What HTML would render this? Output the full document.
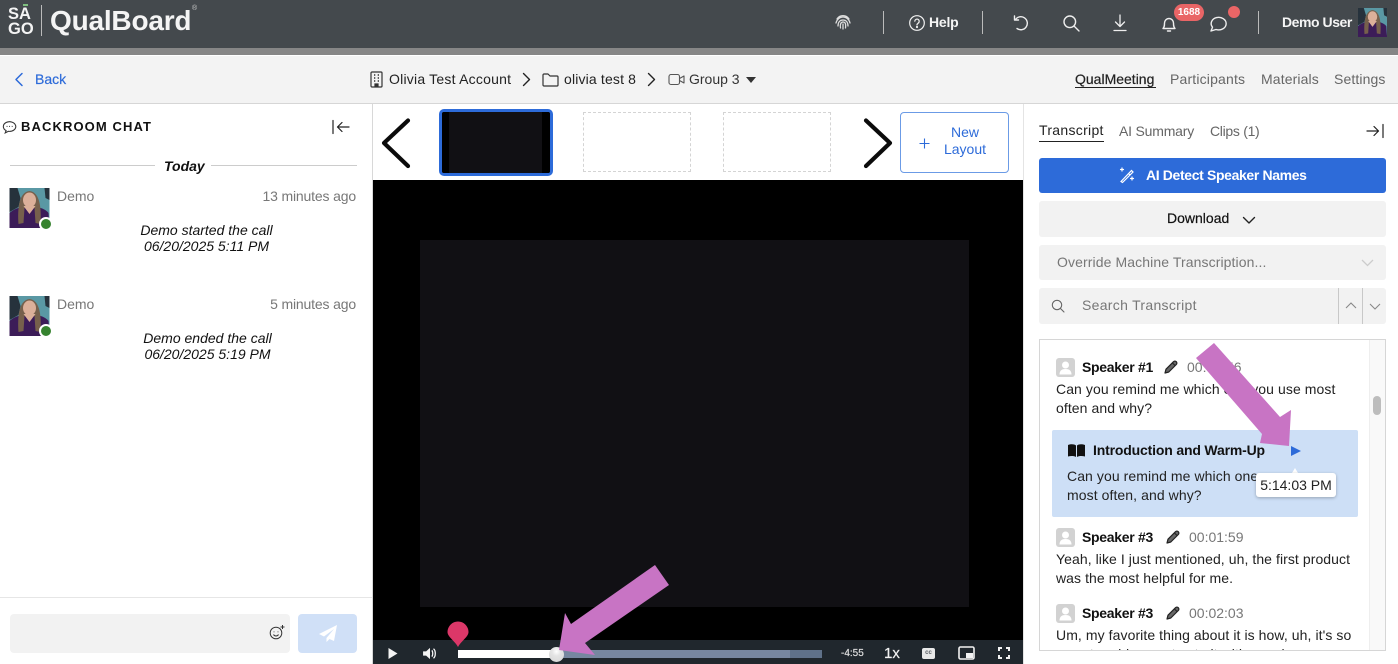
<!DOCTYPE html>
<html lang="en">
<head>
<meta charset="utf-8">
<title>QualBoard</title>
<style>
html,body{margin:0;padding:0;width:1398px;height:664px;overflow:hidden;background:#fff}
body{position:relative;font-family:"Liberation Sans",Arial,sans-serif;color:#111}
.a{position:absolute}
.t{position:absolute;white-space:nowrap;line-height:18px}
svg{position:absolute;overflow:visible}
</style>
</head>
<body>
<svg width="0" height="0" style="position:absolute">
  <symbol id="av" viewBox="0 0 40 40">
    <rect width="40" height="40" rx="4" fill="#5a98a4"/>
    <path d="M0 0h8l3 10-2 9-9 5z" fill="#26323c"/>
    <path d="M35 0h5v12l-4-2z" fill="#26323c"/>
    <path d="M0 40V25c3-3 8-5 12-6h16c4 1 9 3 11 6l1 15z" fill="#3c1c58"/>
    <path d="M9 36C8 22 9 4 20 3c11 1 12 19 11 33l-5-1-1-15H15l-1 15z" fill="#76604c"/>
    <ellipse cx="20" cy="12" rx="6.500" ry="7.500" fill="#dcb09a"/>
    <path d="M14 18h12l-6 8z" fill="#dcb09a"/>
  </symbol>
  <symbol id="user" viewBox="0 0 19 19">
    <rect width="19" height="19" rx="3" fill="#d2d2d2"/>
    <circle cx="9.500" cy="7" r="3.500" fill="#fff"/>
    <path d="M3.500 16.500c0-4 2.500-5.500 6-5.500s6 1.500 6 5.500z" fill="#fff"/>
  </symbol>
  <symbol id="pen" viewBox="0 0 14 14">
    <path d="M1 13l1-3.800 7.500-7.500a1.700 1.700 0 0 1 2.800 2.800L4.800 12z" fill="#666" stroke="#222" stroke-width="1.200" stroke-linejoin="round"/>
    <path d="M8.500 3l2.500 2.500" stroke="#222" stroke-width="1"/>
  </symbol>
</svg>

<!-- Top header -->
<div class="a" style="left:0;top:0;width:1398px;height:48px;background:#44494d"></div>
<div class="a" style="left:0;top:48px;width:1398px;height:7px;background:#868686"></div>
<div class="a" style="left:0;top:55px;width:1398px;height:1px;background:#fff"></div>

<div class="a" style="left:23px;top:4px;width:5px;height:2px;background:#7fbf7f"></div>
<div class="t" style="left:8px;top:7px;font-size:16.500px;font-weight:700;color:#f4f4f4;line-height:15px">SA<br>GO</div>
<div class="a" style="left:41px;top:5px;width:1px;height:31px;background:#bbb"></div>
<div class="t" style="left:50px;top:5px;font-size:28px;line-height:32px;font-weight:700;color:#f4f4f4;letter-spacing:-.2px">QualBoard</div>
<div class="t" style="left:192px;top:3px;font-size:7px;line-height:12px;color:#ccc">®</div>

<!-- header icons -->
<svg style="left:834px;top:13px" width="18" height="18" viewBox="0 0 18 18" fill="none" stroke="#ddd" stroke-width="1.300" stroke-linecap="round">
  <path d="M3 6a7 7 0 0 1 12 0M2 10c1-4 4-6 7-6s6 2 7 6M4 13c0-4 2-6 5-6s5 2 5 6M6.500 15c-.5-3 0-6 2.500-6s3 2 2.500 6M9 11v5"/>
</svg>
<div class="a" style="left:883px;top:11px;width:1px;height:23px;background:#bbb"></div>
<svg style="left:908px;top:14px" width="18" height="18" viewBox="0 0 18 18" fill="none" stroke="#f2f2f2" stroke-width="1.200">
  <circle cx="9" cy="9" r="7.300"/>
  <path d="M6.800 7.200a2.200 2.200 0 1 1 3.300 2c-.8.500-1.100.9-1.100 1.800" stroke-linecap="round"/>
  <circle cx="9" cy="13" r=".5" fill="#f2f2f2"/>
</svg>
<div class="t" style="left:929px;top:13px;font-size:14px;font-weight:700;color:#f5f5f5;letter-spacing:-.2px">Help</div>
<div class="a" style="left:982px;top:11px;width:1px;height:23px;background:#bbb"></div>
<svg style="left:1012px;top:14px" width="18" height="18" viewBox="0 0 18 18" fill="none" stroke="#eee" stroke-width="1.400" stroke-linecap="round" stroke-linejoin="round">
  <path d="M3.500 5.500A6.500 6.500 0 1 1 5 14.500"/><path d="M2.500 2v4h4"/>
</svg>
<svg style="left:1062px;top:14px" width="18" height="18" viewBox="0 0 18 18" fill="none" stroke="#eee" stroke-width="1.400" stroke-linecap="round">
  <circle cx="7.800" cy="7.800" r="5.800"/><path d="M12 12l5 5"/>
</svg>
<svg style="left:1112px;top:14px" width="16" height="18" viewBox="0 0 16 18" fill="none" stroke="#eee" stroke-width="1.300" stroke-linecap="round" stroke-linejoin="round">
  <path d="M8 1v11M3.500 8L8 12.500 12.500 8M2 16.500h12"/>
</svg>
<svg style="left:1161px;top:15px" width="16" height="18" viewBox="0 0 16 18" fill="none" stroke="#eee" stroke-width="1.400" stroke-linejoin="round">
  <path d="M2 13.500c1.500-1.500 1.500-3 1.500-5.500a4.500 4.500 0 0 1 9 0c0 2.500 0 4 1.500 5.500z"/><path d="M6.500 16h3" stroke-linecap="round"/>
</svg>
<div class="a" style="left:1174px;top:4px;width:30px;height:17px;border-radius:9px;background:#e96566;color:#fff;font-size:10px;font-weight:700;text-align:center;line-height:17px">1688</div>
<svg style="left:1209px;top:15px" width="19" height="17" viewBox="0 0 18 17" fill="none" stroke="#eee" stroke-width="1.400" stroke-linejoin="round">
  <path d="M1.500 16l1.500-3.800A7.500 6.300 0 1 1 6.500 14.500z"/>
</svg>
<div class="a" style="left:1228px;top:6px;width:12px;height:12px;border-radius:50%;background:#ea6566"></div>
<div class="a" style="left:1258px;top:11px;width:1px;height:23px;background:#bbb"></div>
<div class="t" style="left:1282px;top:13px;font-size:14px;font-weight:700;color:#f5f5f5;letter-spacing:-.45px">Demo User</div>
<svg style="left:1358px;top:7px" width="29" height="31"><use href="#av" width="29" height="31"/></svg>

<!-- Sub nav -->
<div class="a" style="left:0;top:56px;width:1398px;height:47px;background:#f3f3f3"></div>
<div class="a" style="left:0;top:103px;width:1398px;height:1px;background:#d6d6d6"></div>
<svg style="left:14px;top:72px" width="10" height="15" viewBox="0 0 10 15" fill="none" stroke="#2d6bd9" stroke-width="1.500" stroke-linecap="round" stroke-linejoin="round">
  <path d="M8 1.500L2 7.500l6 6"/>
</svg>
<div class="t" style="left:35px;top:70px;font-size:14px;color:#2d6bd9;font-weight:400;-webkit-text-stroke:.2px #2d6bd9">Back</div>
<svg style="left:370px;top:71px" width="13" height="17" viewBox="0 0 13 17" fill="none" stroke="#333" stroke-width="1.200">
  <rect x="1" y="1" width="11" height="15" rx="1"/>
  <path d="M4 4h1.300M7.700 4H9M4 7h1.300M7.700 7H9M4 10h1.300M7.700 10H9" stroke-width="1.500"/>
  <path d="M5 16v-3h3v3" fill="#333"/>
</svg>
<div class="t" style="left:389px;top:70px;font-size:14px;color:#222;letter-spacing:.22px">Olivia Test Account</div>
<svg style="left:522px;top:72px" width="9" height="15" viewBox="0 0 9 15" fill="none" stroke="#222" stroke-width="1.400" stroke-linecap="round" stroke-linejoin="round"><path d="M1.500 1.500l6 6-6 6"/></svg>
<svg style="left:542px;top:72px" width="17" height="15" viewBox="0 0 17 15" fill="none" stroke="#333" stroke-width="1.200" stroke-linejoin="round">
  <path d="M1 3a1 1 0 0 1 1-1h4l2 2h7a1 1 0 0 1 1 1v8a1 1 0 0 1-1 1H2a1 1 0 0 1-1-1z"/>
</svg>
<div class="t" style="left:564px;top:70px;font-size:14px;color:#222;letter-spacing:.16px">olivia test 8</div>
<svg style="left:647px;top:72px" width="9" height="15" viewBox="0 0 9 15" fill="none" stroke="#222" stroke-width="1.400" stroke-linecap="round" stroke-linejoin="round"><path d="M1.500 1.500l6 6-6 6"/></svg>
<svg style="left:668px;top:73px" width="17" height="13" viewBox="0 0 17 13" fill="none" stroke="#555" stroke-width="1.100" stroke-linejoin="round">
  <rect x="1" y="1.500" width="10.500" height="10" rx="2"/><path d="M11.500 5.500L16 3v7l-4.500-2.500"/>
</svg>
<div class="t" style="left:689px;top:70px;font-size:14px;color:#333">Group 3</div>
<svg style="left:746px;top:77px" width="10" height="6" viewBox="0 0 10 6"><path d="M0 0h10L5 6z" fill="#333"/></svg>

<div class="t" style="left:1075px;top:70px;font-size:14px;color:#222;-webkit-text-stroke:.2px #222">QualMeeting</div>
<div class="a" style="left:1075px;top:87px;width:81px;height:1px;background:#222"></div>
<div class="t" style="left:1170px;top:70px;font-size:14px;color:#666;letter-spacing:.17px">Participants</div>
<div class="t" style="left:1261px;top:70px;font-size:14px;color:#666;letter-spacing:.12px">Materials</div>
<div class="t" style="left:1334px;top:70px;font-size:14px;color:#666;letter-spacing:.12px">Settings</div>

<!-- Left panel -->
<svg style="left:2px;top:120px" width="15" height="14" viewBox="0 0 14 13" fill="none" stroke="#333" stroke-width="1">
  <path d="M3 12l.8-2.200A5.800 4.500 0 1 1 6 10.500z"/><path d="M4.300 6h.8M6.700 6h.8M9.100 6h.8"/>
</svg>
<div class="t" style="left:21px;top:118px;font-size:13px;font-weight:700;letter-spacing:1.100px;color:#111">BACKROOM CHAT</div>
<svg style="left:332px;top:120px" width="18" height="14" viewBox="0 0 18 14" fill="none" stroke="#222" stroke-width="1.200" stroke-linecap="round" stroke-linejoin="round">
  <path d="M1 .5v13M17 7H5.500M10 2.500L5.500 7l4.500 4.500"/>
</svg>
<div class="a" style="left:10px;top:165px;width:145px;height:1px;background:#ccc"></div>
<div class="a" style="left:211px;top:165px;width:146px;height:1px;background:#ccc"></div>
<div class="t" style="left:164px;top:157px;font-size:14px;font-weight:700;font-style:italic;color:#111">Today</div>

<svg style="left:9px;top:188px" width="41" height="40"><use href="#av" width="41" height="40"/></svg>
<div class="a" style="left:39px;top:217px;width:10px;height:10px;border-radius:50%;background:#36832f;border:2px solid #fff"></div>
<div class="t" style="left:57px;top:187px;font-size:14px;color:#777">Demo</div>
<div class="t" style="right:1042px;top:187px;font-size:14px;color:#777;letter-spacing:-.16px">13 minutes ago</div>
<div class="t" style="left:99px;width:215px;top:222px;font-size:14px;font-style:italic;text-align:center;line-height:16px;color:#111">Demo started the call<br>06/20/2025 5:11 PM</div>

<svg style="left:9px;top:296px" width="41" height="40"><use href="#av" width="41" height="40"/></svg>
<div class="a" style="left:39px;top:324px;width:10px;height:10px;border-radius:50%;background:#36832f;border:2px solid #fff"></div>
<div class="t" style="left:57px;top:295px;font-size:14px;color:#777">Demo</div>
<div class="t" style="right:1042px;top:295px;font-size:14px;color:#777;letter-spacing:-.16px">5 minutes ago</div>
<div class="t" style="left:100px;width:215px;top:330px;font-size:14px;font-style:italic;text-align:center;line-height:16px;color:#111">Demo ended the call<br>06/20/2025 5:19 PM</div>

<div class="a" style="left:0;top:597px;width:372px;height:1px;background:#e6e6e6"></div>
<div class="a" style="left:10px;top:614px;width:280px;height:39px;background:#f2f2f2;border-radius:4px"></div>
<svg style="left:268px;top:624px" width="18" height="16" viewBox="0 0 18 16" fill="none" stroke="#333" stroke-width="1">
  <circle cx="8" cy="9" r="5.800"/><path d="M5.500 10.500c1 2 4 2 5 0M6 7.500v.8M10 7.500v.8"/><path d="M14.500 1v4M12.500 3h4"/>
</svg>
<div class="a" style="left:298px;top:614px;width:59px;height:39px;background:#d0e0f7;border-radius:4px"></div>
<svg style="left:318px;top:624px" width="20" height="19" viewBox="0 0 20 19"><path d="M19 1L1 10l5 2.500L16 5 8.500 14v4l3-3 4.500 2z" fill="#fff"/></svg>

<!-- Center -->
<div class="a" style="left:372px;top:104px;width:1px;height:560px;background:#d8d8d8"></div>
<svg style="left:381px;top:118px" width="30" height="50" viewBox="0 0 30 50" fill="none" stroke="#0b0b0b" stroke-width="4.200" stroke-linecap="round" stroke-linejoin="round"><path d="M27 2.500L3 25l24 23"/></svg>
<div class="a" style="left:439px;top:109px;width:114px;height:67px;box-sizing:border-box;border:3px solid #2d6bd9;border-radius:5px;background:#111014;overflow:hidden">
  <div class="a" style="left:0;top:0;width:7px;height:61px;background:#000"></div>
  <div class="a" style="right:0;top:0;width:8px;height:61px;background:#000"></div>
</div>
<div class="a" style="left:583px;top:112px;width:108px;height:60px;box-sizing:border-box;border:1px dashed #d4d4d4"></div>
<div class="a" style="left:723px;top:112px;width:108px;height:60px;box-sizing:border-box;border:1px dashed #d4d4d4"></div>
<svg style="left:863px;top:118px" width="30" height="50" viewBox="0 0 30 50" fill="none" stroke="#0b0b0b" stroke-width="4.200" stroke-linecap="round" stroke-linejoin="round"><path d="M3 2.500L27 25 3 48"/></svg>
<div class="a" style="left:900px;top:112px;width:109px;height:61px;box-sizing:border-box;border:1.500px solid #6b9be6;border-radius:4px;background:#fff"></div>
<svg style="left:918px;top:137px" width="13" height="13" viewBox="0 0 13 13" stroke="#2d6bd9" stroke-width="1.100"><path d="M6.500 1.500v10M1.500 6.500h10"/></svg>
<div class="t" style="left:935px;top:124px;width:60px;text-align:center;font-size:14px;line-height:17px;color:#2d6bd9">New<br>Layout</div>

<div class="a" style="left:373px;top:180px;width:651px;height:460px;background:#000"></div>
<div class="a" style="left:420px;top:240px;width:549px;height:367px;background:#111014"></div>
<div class="a" style="left:373px;top:640px;width:651px;height:24px;background:#20272d"></div>

<svg style="left:388px;top:648px" width="10" height="11" viewBox="0 0 10 11"><path d="M.5 0l9 5.500-9 5.500z" fill="#f4f4f4"/></svg>
<svg style="left:423px;top:647px" width="14" height="13" viewBox="0 0 16 15">
  <path d="M0 5h3.500L8 1v13L3.500 10H0z" fill="#f4f4f4"/>
  <path d="M10 4c1.500 1 1.500 6 0 7M12 2c2.800 2 2.800 9 0 11" fill="none" stroke="#f4f4f4" stroke-width="1.500"/>
</svg>
<div class="a" style="left:458px;top:650px;width:364px;height:8px;background:#5f7189"></div>
<div class="a" style="left:556px;top:650px;width:234px;height:8px;background:#7787a0"></div>
<div class="a" style="left:458px;top:650px;width:98px;height:8px;background:#fff"></div>
<div class="a" style="left:549px;top:647px;width:15px;height:15px;border-radius:50%;background:radial-gradient(circle at 50% 30%,#fff 0,#e4e4e4 35%,#d6d6d6 100%)"></div>
<svg style="left:447px;top:621px" width="22" height="27" viewBox="0 0 22 27"><path d="M11 26C8 20 .5 16 .5 11a10.500 10.500 0 0 1 21 0c0 5-7.500 9-10.500 15z" fill="#dc3768"/></svg>

<div class="t" style="left:841px;top:645px;font-size:10px;color:#ddd;-webkit-text-stroke:.2px #ddd">-4:55</div>
<div class="t" style="left:884px;top:645px;font-size:15px;color:#f2f2f2;-webkit-text-stroke:.2px #f2f2f2">1x</div>
<div class="a" style="left:922px;top:648px;width:13px;height:11px;background:#e8e8e8;border-radius:2px;color:#5a5f65;font-size:6px;font-weight:700;line-height:11px;text-align:center">cc</div>
<svg style="left:958px;top:646px" width="17" height="14" viewBox="0 0 17 14"><rect x="1" y="1" width="15" height="12" rx="1.500" fill="none" stroke="#f2f2f2" stroke-width="1.600"/><rect x="8" y="7" width="7" height="5" fill="#f2f2f2"/></svg>
<svg style="left:998px;top:647px" width="12" height="12" viewBox="0 0 12 12" fill="none" stroke="#f2f2f2" stroke-width="2"><path d="M1 4V1h3M8 1h3v3M11 8v3H8M4 11H1V8"/></svg>

<!-- Right panel -->
<div class="a" style="left:1023px;top:104px;width:1px;height:560px;background:#e4e4e4"></div>
<div class="t" style="left:1039px;top:121px;font-size:14px;color:#222;letter-spacing:.3px">Transcript</div>
<div class="a" style="left:1039px;top:141px;width:65px;height:1px;background:#222"></div>
<div class="t" style="left:1119px;top:122px;font-size:14px;color:#666;letter-spacing:-.2px">AI Summary</div>
<div class="t" style="left:1210px;top:122px;font-size:14px;color:#666;letter-spacing:-.3px">Clips (1)</div>
<svg style="left:1366px;top:124px" width="18" height="14" viewBox="0 0 18 14" fill="none" stroke="#222" stroke-width="1.200" stroke-linecap="round" stroke-linejoin="round"><path d="M17 .5v13M1 7h11.500M8 2.500L12.500 7 8 11.500"/></svg>

<div class="a" style="left:1039px;top:158px;width:347px;height:35px;background:#2d6bd9;border-radius:3px"></div>
<svg style="left:1119px;top:167px" width="16" height="16" viewBox="0 0 16 16" fill="none" stroke="#fff" stroke-width="1.200" stroke-linecap="round"><path d="M2 14.500L12.500 3.500l1.500 1.500L3.500 15.500zM9.500 6.500l1.500 1.500M3 1v3M1.500 2.500h3M13 10v3M11.500 11.500h3"/></svg>
<div class="t" style="left:1146px;top:166px;font-size:14px;font-weight:700;color:#fff;letter-spacing:-.36px">AI Detect Speaker Names</div>

<div class="a" style="left:1039px;top:201px;width:347px;height:36px;background:#f2f2f2;border-radius:3px"></div>
<div class="t" style="left:1167px;top:209px;font-size:14px;color:#111;-webkit-text-stroke:.2px #111">Download</div>
<svg style="left:1242px;top:216px" width="14" height="9" viewBox="0 0 14 9" fill="none" stroke="#222" stroke-width="1.400" stroke-linecap="round" stroke-linejoin="round"><path d="M1.500 1.500L7 7l5.500-5.500"/></svg>

<div class="a" style="left:1039px;top:245px;width:347px;height:35px;background:#f2f2f2;border-radius:3px"></div>
<div class="t" style="left:1057px;top:253px;font-size:14px;color:#777;letter-spacing:.1px">Override Machine Transcription...</div>
<svg style="left:1361px;top:259px" width="13" height="8" viewBox="0 0 13 8" fill="none" stroke="#ccc" stroke-width="1.300"><path d="M1 1l5.500 5.500L12 1"/></svg>

<div class="a" style="left:1039px;top:288px;width:347px;height:36px;background:#f2f2f2;border-radius:3px"></div>
<svg style="left:1051px;top:299px" width="14" height="14" viewBox="0 0 14 14" fill="none" stroke="#666" stroke-width="1.100" stroke-linecap="round"><circle cx="6" cy="6" r="4.700"/><path d="M9.500 9.500l3.500 3.500"/></svg>
<div class="t" style="left:1082px;top:296px;font-size:14px;color:#777;letter-spacing:.3px">Search Transcript</div>
<div class="a" style="left:1338px;top:288px;width:1px;height:36px;background:#c8c8c8"></div>
<div class="a" style="left:1362px;top:288px;width:1px;height:36px;background:#c8c8c8"></div>
<svg style="left:1345px;top:302px" width="12" height="7" viewBox="0 0 12 7" fill="none" stroke="#888" stroke-width="1.100"><path d="M1 6l5-5 5 5"/></svg>
<svg style="left:1369px;top:303px" width="12" height="7" viewBox="0 0 12 7" fill="none" stroke="#888" stroke-width="1.100"><path d="M1 1l5 5 5-5"/></svg>

<!-- Transcript box -->
<div class="a" style="left:1039px;top:339px;width:347px;height:312px;box-sizing:border-box;border:1px solid #d6d6d6;overflow:hidden;background:#fff">
  <div class="a" style="left:329px;top:0;width:16px;height:310px;background:#f9f9f9;border-left:1px solid #eee"></div>
  <div class="a" style="left:333px;top:56px;width:8px;height:19px;background:#bdbdbd;border-radius:4px"></div>
</div>

<svg style="left:1056px;top:358px" width="19" height="19"><use href="#user" width="19" height="19"/></svg>
<div class="t" style="left:1082px;top:358px;font-size:14px;font-weight:700;color:#111;letter-spacing:-.3px">Speaker #1</div>
<svg style="left:1164px;top:360px" width="14" height="14"><use href="#pen" width="14" height="14"/></svg>
<div class="t" style="left:1187px;top:358px;font-size:14px;color:#777">00:01:56</div>
<div class="t" style="left:1056px;top:380px;font-size:14px;line-height:19px;color:#222;letter-spacing:.08px">Can you remind me which one you use most<br>often and why?</div>

<div class="a" style="left:1052px;top:430px;width:306px;height:87px;background:#cddff6;border-radius:2px"></div>
<svg style="left:1068px;top:444px" width="17" height="13" viewBox="0 0 17 13"><path d="M0 1c3-1 6-1 8 .5V13c-2-1.200-5-1.200-8-.5zM17 1c-3-1-6-1-8 .5V13c2-1.200 5-1.200 8-.5z" fill="#111"/></svg>
<div class="t" style="left:1093px;top:441px;font-size:14px;font-weight:700;color:#111;letter-spacing:-.17px">Introduction and Warm-Up</div>
<svg style="left:1291px;top:446px" width="10" height="10" viewBox="0 0 10 10"><path d="M0 0l10 5-10 5z" fill="#2d6bd9"/></svg>
<div class="t" style="left:1067px;top:467px;font-size:14px;line-height:19px;color:#222;letter-spacing:.08px">Can you remind me which one you use<br>most often, and why?</div>
<svg style="left:1292px;top:468px" width="6" height="5" viewBox="0 0 6 5"><path d="M0 5l3-5 3 5z" fill="#fff"/></svg>
<div class="a" style="left:1256px;top:473px;width:80px;height:24px;background:#fff;border-radius:3px;box-shadow:0 1px 3px rgba(0,0,0,.28);font-size:14px;line-height:24px;text-align:center;color:#222;white-space:nowrap">5:14:03 PM</div>

<svg style="left:1056px;top:528px" width="19" height="19"><use href="#user" width="19" height="19"/></svg>
<div class="t" style="left:1082px;top:528px;font-size:14px;font-weight:700;color:#111;letter-spacing:-.3px">Speaker #3</div>
<svg style="left:1166px;top:530px" width="14" height="14"><use href="#pen" width="14" height="14"/></svg>
<div class="t" style="left:1189px;top:528px;font-size:14px;color:#777">00:01:59</div>
<div class="t" style="left:1056px;top:550px;font-size:14px;line-height:19px;color:#222;letter-spacing:.07px">Yeah, like I just mentioned, uh, the first product<br>was the most helpful for me.</div>

<svg style="left:1056px;top:604px" width="19" height="19"><use href="#user" width="19" height="19"/></svg>
<div class="t" style="left:1082px;top:604px;font-size:14px;font-weight:700;color:#111;letter-spacing:-.3px">Speaker #3</div>
<svg style="left:1166px;top:606px" width="14" height="14"><use href="#pen" width="14" height="14"/></svg>
<div class="t" style="left:1189px;top:604px;font-size:14px;color:#777">00:02:03</div>
<div class="a" style="left:1056px;top:626px;width:315px;height:24px;overflow:hidden;font-size:14px;line-height:19px;color:#222;white-space:nowrap;letter-spacing:.08px">Um, my favorite thing about it is how, uh, it's so<br>easy to add my notes to it with, you know</div>

<!-- Pink arrows -->
<svg style="left:0;top:0" width="1398" height="664" viewBox="0 0 1398 664">
  <polygon points="1214,343 1280,417 1291,410 1289,446 1260,443 1262,434 1196,358" fill="#c874c4"/>
  <polygon points="655,565 669,585 585,643 595,655 559,650 565,613 571,624" fill="#c874c4"/>
</svg>
</body>
</html>
